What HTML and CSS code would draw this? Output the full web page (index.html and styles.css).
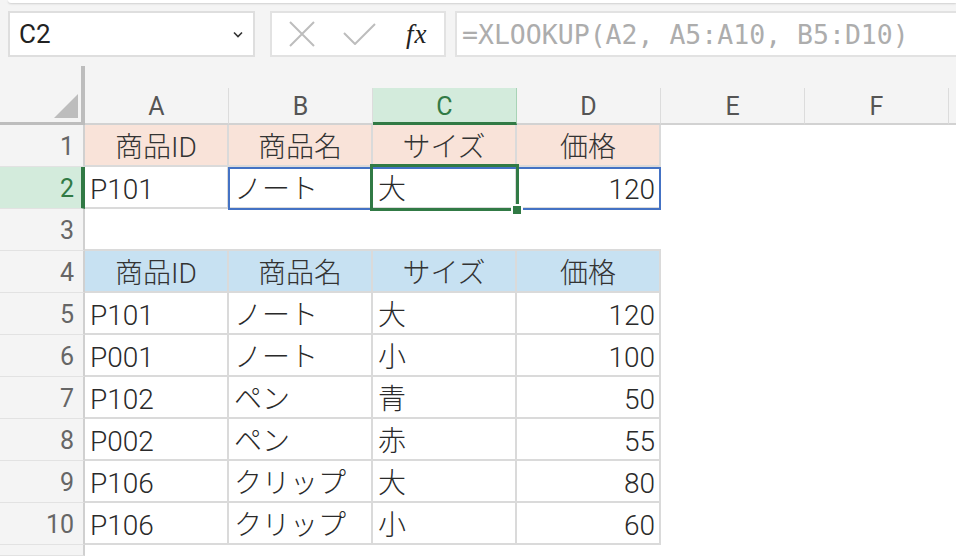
FILE: index.html
```html
<!DOCTYPE html>
<html lang="ja">
<head>
    <meta charset="UTF-8">
    <title>XLOOKUP</title>
    <link rel="stylesheet" href="styles.css">
</head>
<body>
    <div class="ribbon"></div>
    <div class="toolbar">
        <div class="namebox">
            <span>C2</span>
            <svg class="chev" width="10" height="7" viewBox="0 0 10 7"><path d="M1 1.5 L5 5.5 L9 1.5" fill="none" stroke="#333" stroke-width="1.6"/></svg>
        </div>
        <div class="fxbox">
            <svg class="ico-x" width="26" height="26" viewBox="0 0 26 26"><path d="M1 1 L25 25 M25 1 L1 25" stroke="#bdbdbd" stroke-width="2"/></svg>
            <svg class="ico-ok" width="33" height="22" viewBox="0 0 33 22"><path d="M1 10 L12 21 L32 1" fill="none" stroke="#bdbdbd" stroke-width="2"/></svg>
            <span class="fx">fx</span>
        </div>
        <div class="formula">=XLOOKUP(A2, A5:A10, B5:D10)</div>
    </div>

    <div class="sheet">
        <!-- column headers -->
        <div class="corner"><div class="tri"></div></div>
        <div class="ch">A</div>
        <div class="ch">B</div>
        <div class="ch on">C</div>
        <div class="ch">D</div>
        <div class="ch">E</div>
        <div class="ch">F</div>
        <div class="ch last"></div>

        <!-- row 1 -->
        <div class="rh">1</div>
        <div class="c t hd peach">商品ID</div>
        <div class="c t hd peach">商品名</div>
        <div class="c t hd peach">サイズ</div>
        <div class="c t hd peach">価格</div>
        <div class="c"></div><div class="c"></div><div class="c"></div>

        <!-- row 2 : B2:D2 range and C2 selection drawn over the cells -->
        <div class="rh on">2</div>
        <div class="c t">P101</div>
        <div class="c t has-range">ノート<div class="range"></div></div>
        <div class="c t has-sel">大<div class="sel"></div></div>
        <div class="c t num">120</div>
        <div class="c"></div><div class="c"></div><div class="c"></div>

        <!-- row 3 -->
        <div class="rh">3</div>
        <div class="c b"></div><div class="c b"></div><div class="c b"></div><div class="c b"></div>
        <div class="c"></div><div class="c"></div><div class="c"></div>

        <!-- row 4 -->
        <div class="rh">4</div>
        <div class="c t hd blue">商品ID</div>
        <div class="c t hd blue">商品名</div>
        <div class="c t hd blue">サイズ</div>
        <div class="c t hd blue">価格</div>
        <div class="c"></div><div class="c"></div><div class="c"></div>

        <!-- rows 5-10 -->
        <div class="rh">5</div>
        <div class="c t">P101</div><div class="c t">ノート</div><div class="c t">大</div><div class="c t num">120</div>
        <div class="c"></div><div class="c"></div><div class="c"></div>

        <div class="rh">6</div>
        <div class="c t">P001</div><div class="c t">ノート</div><div class="c t">小</div><div class="c t num">100</div>
        <div class="c"></div><div class="c"></div><div class="c"></div>

        <div class="rh">7</div>
        <div class="c t">P102</div><div class="c t">ペン</div><div class="c t">青</div><div class="c t num">50</div>
        <div class="c"></div><div class="c"></div><div class="c"></div>

        <div class="rh">8</div>
        <div class="c t">P002</div><div class="c t">ペン</div><div class="c t">赤</div><div class="c t num">55</div>
        <div class="c"></div><div class="c"></div><div class="c"></div>

        <div class="rh">9</div>
        <div class="c t">P106</div><div class="c t">クリップ</div><div class="c t">大</div><div class="c t num">80</div>
        <div class="c"></div><div class="c"></div><div class="c"></div>

        <div class="rh">10</div>
        <div class="c t">P106</div><div class="c t">クリップ</div><div class="c t">小</div><div class="c t num">60</div>
        <div class="c"></div><div class="c"></div><div class="c"></div>

        <!-- row 11 (partial) -->
        <div class="rh"></div>
        <div class="c"></div><div class="c"></div><div class="c"></div><div class="c"></div>
        <div class="c"></div><div class="c"></div><div class="c"></div>
    </div>
</body>
</html>
```

FILE: styles.css
```css
body {
    margin: 0;
    width: 956px;
    height: 556px;
    overflow: hidden;
    background-color: #f4f4f4;
    font-family: Roboto, "Noto Sans CJK JP", sans-serif;
    color: #222;
}
.ribbon {
    height: 3px;
    margin-left: 8px;
    background-color: #fff;
    border-bottom-left-radius: 8px;
    box-shadow: 0 1px 2px rgba(0, 0, 0, 0.15);
}
.toolbar {
    display: flex;
    height: 46px;
    padding: 8px 0 9px 8px;
}
.namebox {
    box-sizing: border-box;
    width: 247px;
    height: 46px;
    padding: 0 10px 0 9px;
    border: 2px solid #dedede;
    background-color: #fff;
    display: flex;
    align-items: center;
    justify-content: space-between;
    font-size: 26px;
    color: #222;
}
.fxbox {
    box-sizing: border-box;
    width: 176px;
    height: 46px;
    margin-left: 15px;
    border: 2px solid #e2e2e2;
    background-color: #fff;
    display: flex;
    align-items: center;
}
.ico-x {
    margin-left: 17px;
}
.ico-ok {
    margin-left: 28px;
}
.fx {
    margin-left: 30px;
    font-family: "Liberation Serif", serif;
    font-style: italic;
    font-size: 27px;
    color: #222;
    letter-spacing: 1px;
}
.formula {
    flex: 1;
    min-width: 0;
    box-sizing: border-box;
    height: 46px;
    margin-left: 9px;
    padding-left: 5px;
    border: 2px solid #e2e2e2;
    border-right: none;
    background-color: #fff;
    display: flex;
    align-items: center;
    font-family: "DejaVu Sans Mono", monospace;
    font-size: 26.5px;
    color: #adadad;
    white-space: nowrap;
    overflow: hidden;
}

/* grid */
.sheet {
    display: grid;
    grid-template-columns: 85px repeat(6, 144px) 1fr;
    grid-template-rows: 59px repeat(10, 42px) 1fr;
    height: 490px;
}
.corner {
    box-sizing: border-box;
    border-right: 4px solid #bdbdbd;
    border-bottom: 3px solid #bdbdbd;
    display: flex;
    align-items: flex-end;
    justify-content: flex-end;
    padding: 0 3px 4px 0;
}
.tri {
    width: 24px;
    height: 24px;
    background-color: #bdbdbd;
    clip-path: polygon(100% 0, 100% 100%, 0 100%);
}
.ch {
    margin-top: 22px;
    padding-top: 2px;
    border-right: 1px solid #dcdcdc;
    border-bottom: 2px solid #d2d2d2;
    display: flex;
    align-items: center;
    justify-content: center;
    font-size: 25px;
    color: #555;
}
.ch.on {
    background-color: #d3ebdc;
    border-right-color: #a8d3b6;
    border-bottom: 3px solid #317a45;
    color: #317a45;
}
.ch.last {
    border-right: none;
}
.rh {
    box-sizing: border-box;
    border-right: 2px solid #d0d0d0;
    border-bottom: 1px solid #e2e2e2;
    padding: 2px 9px 0 0;
    display: flex;
    align-items: center;
    justify-content: flex-end;
    font-size: 25px;
    color: #666;
}
.rh.on {
    background-color: #d3ebdc;
    border-right: 4px solid #317a45;
    padding-right: 7px;
    color: #317a45;
}
.c {
    box-sizing: border-box;
    min-width: 0;
    background-color: #fff;
    padding: 5px 5px 0;
    display: flex;
    align-items: center;
    font-size: 28px;
    font-weight: 300;
    line-height: 1;
    color: #2a2a2a;
    white-space: nowrap;
}
.c.t {
    border-right: 2px solid #dadada;
    border-bottom: 2px solid #dadada;
}
.c.b {
    border-bottom: 2px solid #dadada;
}
.c.hd {
    justify-content: center;
    color: #333;
}
.c.num {
    justify-content: flex-end;
    padding-right: 4px;
}
.peach {
    background-color: #f9e3d9;
}
.blue {
    background-color: #c7e1f2;
}

/* highlights */
.has-range,
.has-sel {
    position: relative;
}
.range {
    position: absolute;
    left: -1px;
    top: 0;
    width: 429px;
    height: 39px;
    border: 2px solid #4472c4;
    z-index: 1;
}
.sel {
    position: absolute;
    left: -3px;
    top: -3px;
    width: 143px;
    height: 41px;
    border: 3px solid #317a45;
    z-index: 2;
}
.sel::after {
    content: "";
    position: absolute;
    right: -5px;
    bottom: -6px;
    width: 8px;
    height: 8px;
    background-color: #317a45;
    box-shadow: 0 0 0 2px #fff;
}
```
